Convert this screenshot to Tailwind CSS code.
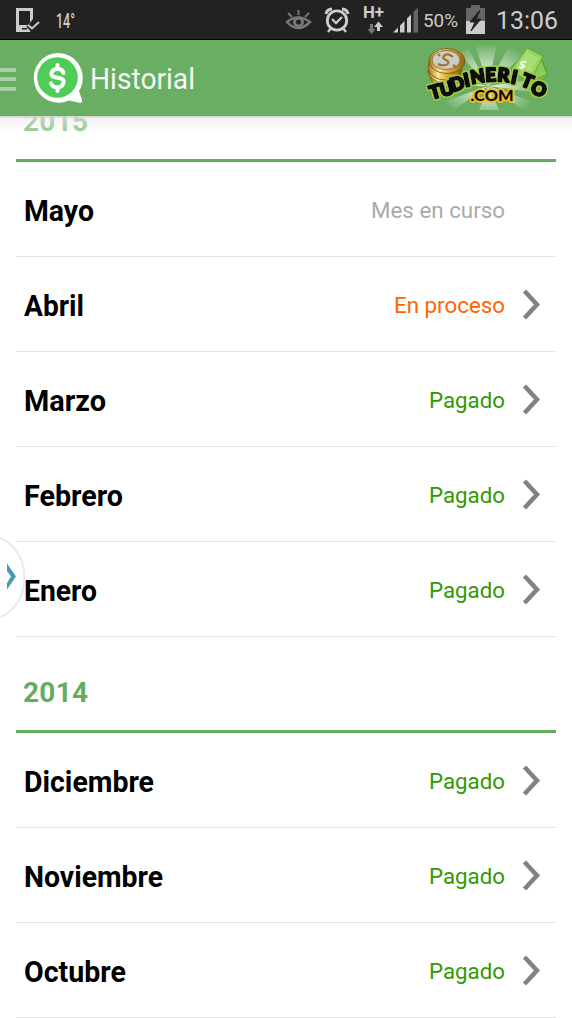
<!DOCTYPE html>
<html lang="es"><head><meta charset="utf-8"><title>Historial</title>
<script src="https://cdn.jsdelivr.net/npm/@tailwindcss/browser@4"></script></head>
<body class="bg-white">
<div class="relative w-[572px] h-[1018px] overflow-hidden bg-white font-['Roboto',sans-serif] flex flex-col">
<header class="shrink-0">
<div class="h-10 bg-[#222222] border-b border-black">
<svg class="block" width="572" height="39" font-family="Roboto, sans-serif" fill="#ccc">
<path d="M16 8h17v11l-4 5 3 3-2 5H16zM19 11v14h9l2-3V11z" fill-rule="evenodd"/><path d="M22 28h5v1.500h-5z" fill="#222"/><path d="M28 25l4 4 7-7" fill="none" stroke="#222" stroke-width="5"/><path d="M28 25l4 3.500 7-6.500" fill="none" stroke="#ccc" stroke-width="2"/>
<text x="56" y="28" font-size="21" font-weight="500" textLength="19" lengthAdjust="spacingAndGlyphs">14°</text>
<g fill="none" stroke="#777"><path d="M287 22q11-9 23 0q-12 12-23 0z" stroke-width="2.500"/><circle cx="298.500" cy="22" r="4" stroke-width="3"/><path d="M288 13l4 4M298.500 10v5M309 13l-4 4" stroke-width="2"/></g>
<g fill="none" stroke="#ccc"><circle cx="337" cy="20.500" r="9.700" stroke-width="2.800"/><path d="M332 19l4 4 6-6M331 28l-3 4M343 28l3 4" stroke-width="2.300"/><path d="M326 14q1-5 6-5M348 14q-1-5-6-5" stroke-width="3"/></g>
<text x="363" y="18" font-size="16" font-weight="700" textLength="21" lengthAdjust="spacingAndGlyphs">H+</text>
<path d="M370 24h3v5h2.500l-4 5-4-5h2.500z" fill="#777"/><path d="M377 31h3v-4h3l-4.500-5.500-4.500 5.500h3z"/>
<path d="M393 32.500l5-5v5zM400 25.500l4.500-4.500v11.500H400zM407 18.500l4-4v18h-4z"/><path d="M413.500 12l4.500-4.500v25h-4.500z" fill="#666"/>
<text x="423" y="27" font-size="18.500" textLength="35" lengthAdjust="spacingAndGlyphs">50%</text>
<path d="M466 8h5V5h9v3h5v13h-19z" fill="#666"/><path d="M466 21h19v13h-19z"/><path d="M479 11l-9 11h5l-4 9 10-12h-5l4-8z" fill="#222" stroke="#222"/>
<text x="496" y="29" font-size="26.500" textLength="62" lengthAdjust="spacingAndGlyphs">13:06</text>
</svg></div>
<div class="h-[76px] bg-[#6aae63] border-t border-[#63b55a] flex justify-between">
<svg class="block" width="210" height="75" viewBox="0 41 210 75" font-family="Roboto, sans-serif">
<path d="M0 70h16M0 79h16M0 89h16" stroke="#a9d0a5" stroke-width="4"/>
<path d="M57.500 53A24.900 24.900 0 1 0 69 100.500L80.500 103Q82.500 102.500 82 100L79 91A24.900 24.900 0 0 0 57.500 53z" fill="#fff"/><circle cx="57.500" cy="77.500" r="20.300" fill="#50cc58"/><path d="M67 97l5-3 4-6 4 14z" fill="#fff"/>
<path d="M63.500 73q-1-4-6-4t-6 4 6 4.700 6 5-6 4.600-6.500-4M57.500 65v3M57.500 88v3" fill="none" stroke="#fff" stroke-width="4" stroke-linecap="round"/>
<text x="90" y="89" font-size="29" fill="#f5faf4" textLength="105" lengthAdjust="spacingAndGlyphs">Historial</text>
</svg>
<svg class="block" width="157" height="75" viewBox="415 41 157 75" font-family="Lato, sans-serif" font-weight="900" text-anchor="middle">
<defs><radialGradient id="ray" gradientUnits="userSpaceOnUse" cx="488" cy="82" r="52" gradientTransform="translate(0 20) scale(1 .76)"><stop stop-color="#fff" stop-opacity=".9"/><stop offset=".5" stop-color="#fff" stop-opacity=".5"/><stop offset="1" stop-color="#fff" stop-opacity="0"/></radialGradient>
<linearGradient id="gold"><stop stop-color="#a87a16"/><stop offset=".3" stop-color="#ffe795"/><stop offset=".6" stop-color="#d6a32a"/><stop offset="1" stop-color="#8f6410"/></linearGradient>
<filter id="outline" x="-10%" y="-20%" width="120%" height="140%"><feMorphology in="SourceAlpha" operator="dilate" radius="1"/><feGaussianBlur stdDeviation=".7" result="edge"/><feFlood flood-color="#a5cc48"/><feComposite in2="edge" operator="in" result="halo"/><feMerge><feMergeNode in="halo"/><feMergeNode in="halo"/><feMergeNode in="SourceGraphic"/></feMerge></filter></defs>
<path fill="url(#ray)" d="M488 86L475 44h22zM488 86L509 46l15 9zM488 86L545 78v16zM488 86l48 17-14 6zM488 86l11 24h-20zM488 86l-33 23-12-7zM488 86l-58 0v-10zM488 86l-30-34 10-4z"/>
<g fill="url(#gold)" stroke="#76530d" stroke-width=".8"><ellipse cx="446" cy="76" rx="16" ry="11"/><ellipse cx="445" cy="71" rx="17" ry="12"/><ellipse cx="445" cy="67" rx="17" ry="13"/><ellipse cx="447" cy="61" rx="18" ry="12.500"/></g><ellipse cx="446" cy="60" rx="14" ry="9.500" fill="#c9ccc9" stroke="#8f7430"/><path d="M453 57q-4-4-8-2-4 3 1 5 5 3 0 5-5 1-8-1M440 56l-2-2M453 65l3 2" fill="none" stroke="#a37722" stroke-width="2.200"/>
<g stroke="#5b9d30" stroke-width=".8"><path d="M527 61l14-4 7 18-15 12z" fill="#78bd45"/><path d="M525 57l14-2 8 19-14 7z" fill="#8bcd57"/><path d="M527 48l16 8-13 27-19-13z" fill="#97d662"/></g><path d="M527 52l11 6-9 18-13-9z" fill="#a7df73"/><path d="M526 62q-5-1-5 2l3 2q-1 3-5 1" stroke="#f4ffe8" stroke-width="2" fill="none"/>
<g font-size="18.500" fill="#080808" stroke="#080808" stroke-width="2.300" stroke-linejoin="round" filter="url(#outline)">
<text transform="translate(437 98) rotate(-16)">T</text><text transform="translate(448.500 95) rotate(-16)">U</text><text transform="translate(459 90) rotate(-16)">D</text><text transform="translate(468 86.500) rotate(-12)">I</text><text transform="translate(478.500 83) rotate(-9)">N</text><text transform="translate(491 81.500) rotate(-3)">E</text><text transform="translate(503 81.500) rotate(5)">R</text><text transform="translate(513 83.500) rotate(12)">I</text><text transform="translate(525 87) rotate(22)">T</text><text transform="translate(536.500 95) rotate(22)">O</text></g>
<text x="492" y="101" font-size="15.500" fill="#080808" stroke="#f5bb20" stroke-width="3.500" stroke-linejoin="round" paint-order="stroke" textLength="43" lengthAdjust="spacingAndGlyphs">.COM</text>
</svg>
</div></header>
<main class="relative flex-1 min-h-0 overflow-hidden px-4">
<div class="absolute inset-x-0 top-0 h-[18px] z-10 bg-linear-to-b from-[#cfcfcf] via-[#ededed]/65 via-15% to-white/30"></div>
<section class="-mt-[50px]"><h2 class="h-24 border-b-3 border-[#65ad5e] pl-[7px] pt-[38px] text-[28px] leading-9 font-bold tracking-[0.3px] text-[#65ad5e]">2015</h2><div id="y2015"></div></section>
<section><h2 class="h-24 border-b-3 border-[#65ad5e] pl-[7px] pt-[38px] text-[28px] leading-9 font-bold tracking-[0.3px] text-[#65ad5e]">2014</h2><div id="y2014"></div></section>
<svg class="absolute left-0 top-[418px]" width="27" height="88"><ellipse cx="-11" cy="43.500" rx="35.500" ry="41.500" fill="#fff" stroke="#eaeaea" stroke-width="2"/><path d="M7 29.500L16 42.500 7 55.500V49L11 42.500 7 37z" fill="#4899b8"/></svg>
</main></div>
<script>
const months = {
  y2015: [['Mayo',70,'Mes en curso',134,'#aaaaaa'],['Abril',60,'En proceso',111,'#ff6600'],['Marzo',82,'Pagado',76,'#339900'],['Febrero',99,'Pagado',76,'#339900'],['Enero',73,'Pagado',76,'#339900']],
  y2014: [['Diciembre',130,'Pagado',76,'#339900'],['Noviembre',139,'Pagado',76,'#339900'],['Octubre',102,'Pagado',76,'#339900']]
};
for (const id in months) document.getElementById(id).innerHTML = months[id].map(([m, mw, s, sw, c]) => `
<div class="h-[95px] border-b border-[#e2e5e2] flex justify-between">
<svg class="relative z-10 block" width="220" height="94"><text x="8" y="59" font-size="29" font-weight="700" textLength="${mw}" lengthAdjust="spacingAndGlyphs">${m}</text></svg>
<svg class="block" width="240" height="94"><text x="${189 - sw}" y="56" font-size="22.500" fill="${c}" textLength="${sw}" lengthAdjust="spacingAndGlyphs">${s}</text>${s === 'Mes en curso' ? '' : '<path d="M208.500 34l12.500 13.500-12.500 13.500" fill="none" stroke="#828282" stroke-width="4.500"/>'}</svg></div>`).join('');
</script>
</body></html>
